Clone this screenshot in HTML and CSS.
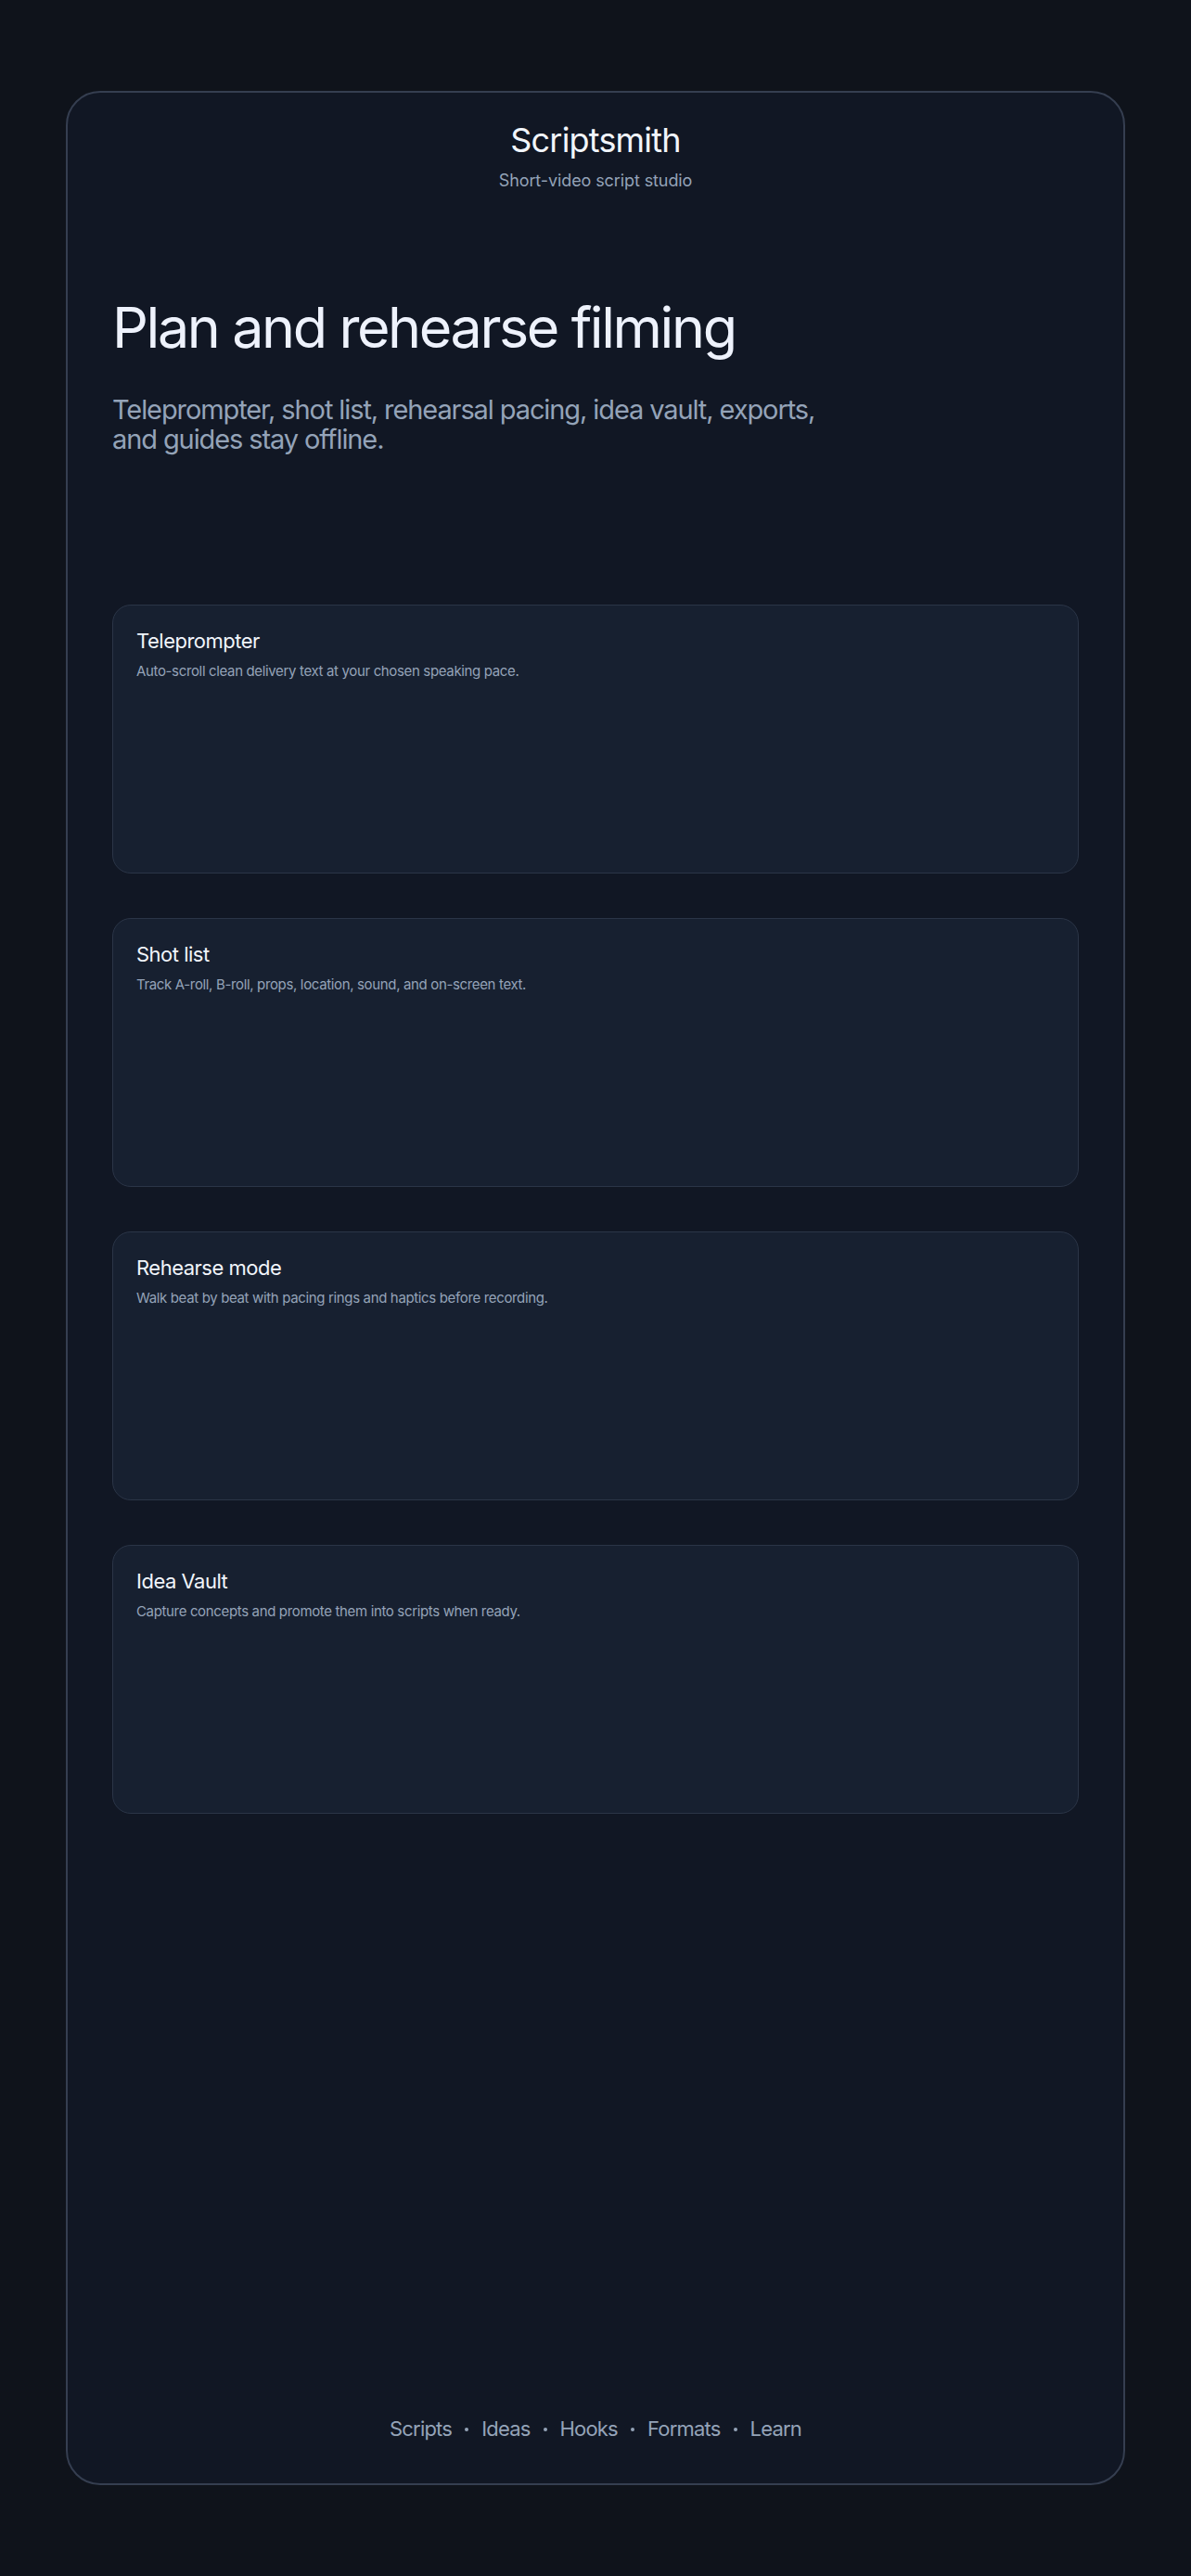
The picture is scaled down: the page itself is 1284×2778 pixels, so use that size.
FILE: index.html
```html
<!DOCTYPE html>
<html lang="en">
<head>
<meta charset="utf-8">
<meta name="viewport" content="width=device-width, initial-scale=1">
<title>Scriptsmith</title>
<link rel="stylesheet" href="styles.css">
</head>
<body>
<div class="frame">
  <header class="brand">
    <h1 class="brand-name">Scriptsmith</h1>
    <p class="brand-tag">Short-video script studio</p>
  </header>
  <section class="hero">
    <h2 class="hero-title">Plan and rehearse filming</h2>
    <p class="hero-text">Teleprompter, shot list, rehearsal pacing, idea vault, exports, and guides stay offline.</p>
  </section>
  <section class="cards">
    <article class="card">
      <h3 class="card-title">Teleprompter</h3>
      <p class="card-text">Auto-scroll clean delivery text at your chosen speaking pace.</p>
    </article>
    <article class="card">
      <h3 class="card-title">Shot list</h3>
      <p class="card-text">Track A-roll, B-roll, props, location, sound, and on-screen text.</p>
    </article>
    <article class="card">
      <h3 class="card-title">Rehearse mode</h3>
      <p class="card-text">Walk beat by beat with pacing rings and haptics before recording.</p>
    </article>
    <article class="card">
      <h3 class="card-title">Idea Vault</h3>
      <p class="card-text">Capture concepts and promote them into scripts when ready.</p>
    </article>
  </section>
  <nav class="tabs">
    <span class="tab">Scripts</span><span class="dot"></span>
    <span class="tab">Ideas</span><span class="dot"></span>
    <span class="tab">Hooks</span><span class="dot"></span>
    <span class="tab">Formats</span><span class="dot"></span>
    <span class="tab">Learn</span>
  </nav>
</div>
</body>
</html>
```
FILE: styles.css
```css
* { box-sizing: border-box; }
html, body { margin: 0; padding: 0; }
body {
  background: #0f131b;
  font-family: Inter, "Noto Sans", sans-serif;
  color: #f1f5f9;
  padding: 98px 71px;
  min-height: 100vh;
}
.frame {
  min-height: calc(100vh - 196px);
  background: #111724;
  border: 2px solid #353e50;
  border-radius: 37px;
  padding: 29px 48px 46px;
  display: flex;
  flex-direction: column;
}
.brand { text-align: center; }
.brand-name {
  margin: 0;
  font-size: 36px;
  font-weight: 400;
  line-height: normal;
  letter-spacing: -0.8px;
  color: #f1f5fb;
}
.brand-tag {
  margin: 8px 0 0;
  font-size: 18px;
  line-height: 1.5;
  letter-spacing: -0.1px;
  color: #94a3b8;
}
.hero { margin-top: 108px; }
.hero-title {
  margin: 0;
  font-size: 61px;
  font-weight: 400;
  line-height: normal;
  letter-spacing: -2.4px;
  color: #eef2fc;
}
.hero-text {
  margin: 36px 0 0;
  max-width: 790px;
  font-size: 29px;
  line-height: 32px;
  letter-spacing: -1.1px;
  color: #94a3b8;
}
.cards {
  margin-top: 162px;
  display: flex;
  flex-direction: column;
  gap: 48px;
}
.card {
  height: 290px;
  background: #172030;
  border: 1px solid #2b3547;
  border-radius: 20px;
  padding: 25px 25px;
}
.card-title {
  margin: 0;
  font-size: 22px;
  font-weight: 400;
  line-height: normal;
  letter-spacing: -0.5px;
  color: #f1f5fb;
}
.card-text {
  margin: 9px 0 0;
  font-size: 15px;
  line-height: 1.5;
  letter-spacing: -0.35px;
  color: #94a3b8;
}
.tabs {
  margin-top: auto;
  display: flex;
  justify-content: center;
  align-items: center;
  gap: 14px;
  font-size: 22px;
  line-height: normal;
  letter-spacing: -0.8px;
  color: #94a3b8;
}
.dot {
  width: 4px;
  height: 4px;
  border-radius: 50%;
  background: #94a3b8;
  margin-top: 1px;
}
```
